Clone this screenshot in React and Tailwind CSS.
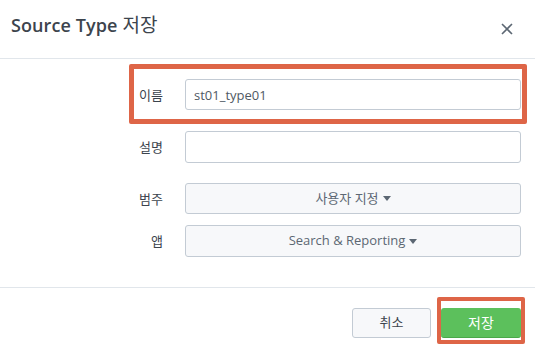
import React from "react";

const font = { fontFamily: "'Open Sans', 'Noto Sans CJK KR', sans-serif" };

const Caret = () => (
  <svg width="8" height="5" viewBox="0 0 8 5" className="ml-[4px] inline-block">
    <path d="M0 0 L8 0 L4 5 Z" fill="#5c6773" />
  </svg>
);

const Row = ({ label, children, className = "" }) => (
  <div className={`flex items-start ${className}`}>
    <div className="w-[163px] pt-[6px] text-right text-[13px] leading-[20px] text-[#3c444d]">{label}</div>
    <div className="ml-[22px] w-[336px]">{children}</div>
  </div>
);

export default function App() {
  return (
    <div className="relative h-[347px] w-[535px] overflow-hidden bg-white" style={font}>
      {/* header */}
      <div className="flex h-[59px] items-start justify-between border-b border-[#e1e6eb] pl-[11px] pr-[22px] pt-[12px]">
        <h2 className="text-[19px] leading-[26px] text-[#3c444d]">
          <span className="text-[18px] font-semibold tracking-[0.1px]">Source Type</span> 저장
        </h2>
        <button className="mt-[11px] text-[#5c6773]">
          <svg width="12" height="12" viewBox="0 0 12 12">
            <path d="M1 1 L11 11 M11 1 L1 11" stroke="#5c6773" strokeWidth="1.6" />
          </svg>
        </button>
      </div>

      {/* body */}
      <div className="pt-[20px]">
        <Row label="이름" className="relative">
          <input
            className="h-[31px] w-full rounded-[3px] border border-[#c3cbd4] px-[8px] text-[13px] text-[#4f5963] outline-none"
            defaultValue="st01_type01"
          />
          <div className="pointer-events-none absolute left-[129px] top-[-15px] h-[60px] w-[398px] rounded-[2px] border-[5px] border-[#de6547]" />
        </Row>
        <Row label="설명" className="mt-[21px]">
          <input className="h-[32px] w-full rounded-[3px] border border-[#c3cbd4] px-[8px] text-[13px] outline-none" />
        </Row>
        <Row label="범주" className="mt-[20px]">
          <button className="flex h-[31px] w-full items-center justify-center rounded-[3px] border border-[#c3cbd4] bg-[#f7f8fa] text-[13px] text-[#5c6773]">
            사용자 지정
            <Caret />
          </button>
        </Row>
        <Row label="앱" className="mt-[11px]">
          <button className="flex h-[32px] w-full items-center justify-center rounded-[3px] border border-[#c3cbd4] bg-[#f7f8fa] text-[13px] text-[#5c6773]">
            Search &amp; Reporting
            <Caret />
          </button>
        </Row>
      </div>

      {/* footer */}
      <div className="absolute bottom-0 left-0 right-0 top-[287px] border-t border-[#e1e6eb]">
        <div className="flex justify-end gap-[10px] pr-[14px] pt-[20px]">
          <button className="h-[30px] w-[79px] rounded-[3px] border border-[#c3cbd4] bg-[#f7f8fa] text-[13px] text-[#3c444d]">
            취소
          </button>
          <div className="relative">
            <button className="h-[30px] w-[80px] rounded-[3px] border-b border-[#4aa84a] bg-[#5cc05c] text-[14px] text-white">
              저장
            </button>
            <div className="pointer-events-none absolute left-[-4px] top-[-11px] h-[47px] w-[88px] rounded-[2px] border-[4px] border-[#de6547]" />
          </div>
        </div>
      </div>
    </div>
  );
}
